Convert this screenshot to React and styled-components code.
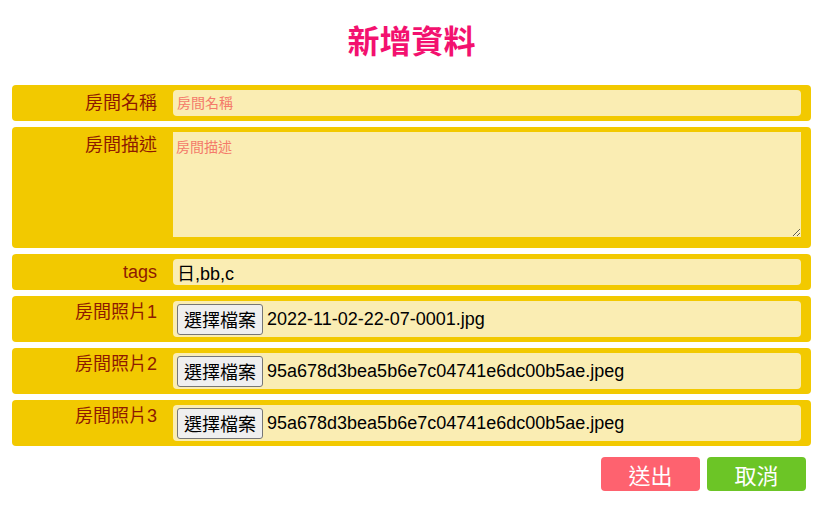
import React from "react";
import styled, { createGlobalStyle } from "styled-components";

const GlobalStyle = createGlobalStyle`
  body {
    margin: 0;
    background: #fff;
    font-family: "Liberation Sans", "Noto Sans CJK TC", sans-serif;
  }
`;

const Page = styled.div`
  padding: 0 21px 0 12px;
`;

const Title = styled.h1`
  margin: 0;
  padding: 22px 0 23px;
  text-align: center;
  font-size: 32px;
  line-height: 40px;
  font-weight: 700;
  color: #f3116f;
`;

const Form = styled.form`
  display: flex;
  flex-direction: column;
  gap: 6px;
`;

const Row = styled.div`
  display: grid;
  grid-template-columns: 145px 1fr;
  column-gap: 16px;
  align-items: start;
  background: #f2c900;
  border-radius: 4px;
  padding: 5px 10px ${({ $bottom }) => $bottom || "5px"} 0;
`;

const Label = styled.label`
  text-align: right;
  font-size: 18px;
  line-height: ${({ $lh }) => $lh || "26px"};
  color: #8e1a00;
`;

const TextInput = styled.input`
  box-sizing: border-box;
  width: 100%;
  height: 26px;
  border: none;
  outline: none;
  border-radius: 4px;
  background: #faedb3;
  padding: 0 4px;
  font-family: inherit;
  font-size: ${({ $small }) => ($small ? "14px" : "18px")};
  color: #000;
  &::placeholder {
    color: #f47a6a;
  }
`;

const TextArea = styled.textarea`
  display: block;
  box-sizing: border-box;
  width: 100%;
  height: 105px;
  border: none;
  outline: none;
  border-radius: 0;
  background: #faedb3;
  padding: 4px 3px;
  font-family: inherit;
  font-size: 14px;
  &::placeholder {
    color: #f47a6a;
  }
`;

const FileBox = styled.div`
  display: flex;
  align-items: center;
  gap: 4px;
  height: 36px;
  padding: 0 4px;
  border-radius: 4px;
  background: #faedb3;
  font-size: 18px;
  color: #000;
`;

const FileButton = styled.span`
  box-sizing: border-box;
  height: 31px;
  padding: 0 6px;
  display: flex;
  align-items: center;
  background: #efefef;
  border: 1px solid #767676;
  border-radius: 3px;
  font-size: 18px;
`;

const Actions = styled.div`
  display: flex;
  justify-content: flex-end;
  gap: 7px;
  padding: 5px 5px 0 0;
`;

const Button = styled.button`
  width: 99px;
  height: 34px;
  border: none;
  border-radius: 4px;
  background: ${({ $color }) => $color};
  color: #fff;
  font-family: inherit;
  font-size: 22px;
  cursor: pointer;
`;

const files = [
  ["房間照片1", "2022-11-02-22-07-0001.jpg"],
  ["房間照片2", "95a678d3bea5b6e7c04741e6dc00b5ae.jpeg"],
  ["房間照片3", "95a678d3bea5b6e7c04741e6dc00b5ae.jpeg"],
];

export default function App() {
  return (
    <Page>
      <GlobalStyle />
      <Title>新增資料</Title>
      <Form onSubmit={(e) => e.preventDefault()}>
        <Row>
          <Label>房間名稱</Label>
          <TextInput $small placeholder="房間名稱" />
        </Row>
        <Row $bottom="11px">
          <Label>房間描述</Label>
          <TextArea placeholder="房間描述" />
        </Row>
        <Row>
          <Label>tags</Label>
          <TextInput defaultValue="日,bb,c" />
        </Row>
        {files.map(([label, name]) => (
          <Row key={label}>
            <Label $lh="22px">{label}</Label>
            <FileBox>
              <FileButton>選擇檔案</FileButton>
              <span>{name}</span>
            </FileBox>
          </Row>
        ))}
        <Actions>
          <Button type="submit" $color="#fe626f">送出</Button>
          <Button type="button" $color="#6cc526">取消</Button>
        </Actions>
      </Form>
    </Page>
  );
}
